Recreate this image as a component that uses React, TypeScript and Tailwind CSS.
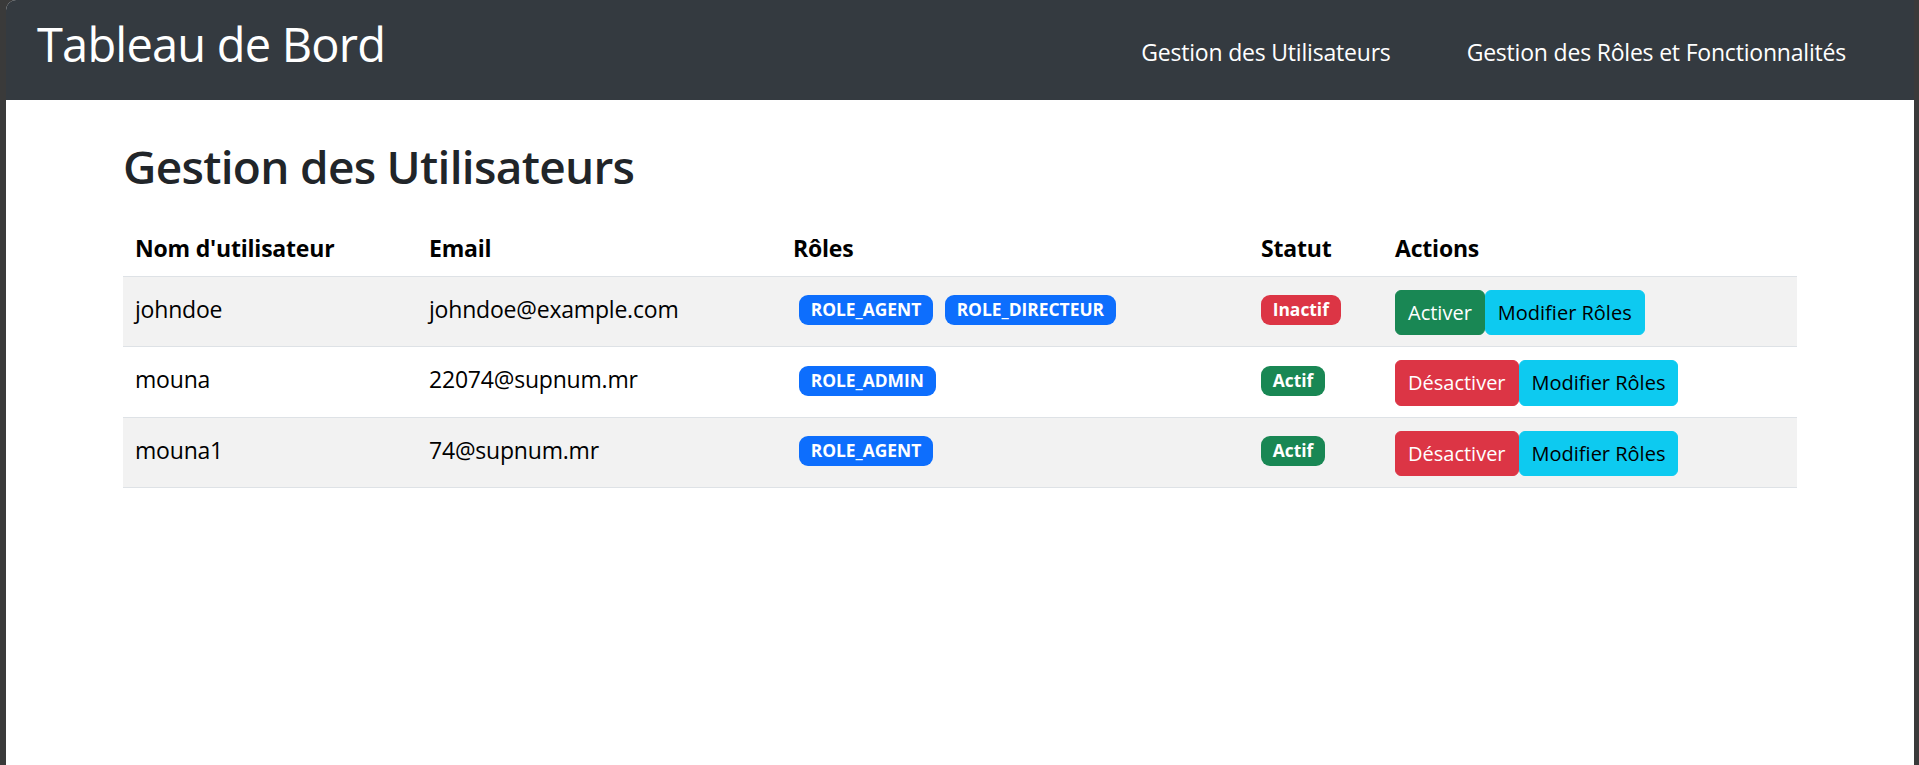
import React from "react";

type User = {
  name: string;
  email: string;
  roles: string[];
  active: boolean;
};

const users: User[] = [
  { name: "johndoe", email: "johndoe@example.com", roles: ["ROLE_AGENT", "ROLE_DIRECTEUR"], active: false },
  { name: "mouna", email: "22074@supnum.mr", roles: ["ROLE_ADMIN"], active: true },
  { name: "mouna1", email: "74@supnum.mr", roles: ["ROLE_AGENT"], active: true },
];

const font = { fontFamily: '"Open Sans", "Noto Sans", Arial, sans-serif' };

function Badge({ color, extra, children }: { color: string; extra?: string; children: React.ReactNode }) {
  return (
    <span
      className={`flex h-[30px] items-center rounded-[9px] px-[11.7px] text-[17.4px] font-bold leading-none text-white ${color} ${extra ?? ""}`}
    >
      {children}
    </span>
  );
}

export default function App() {
  return (
    <div className="h-screen w-full overflow-hidden bg-[#3a3a3a] pl-[6px] pr-[5px]" style={font}>
      <div className="h-full overflow-hidden rounded-tl-[10px] bg-white">
        <nav className="flex h-[100px] items-start justify-between bg-[#343a40] pl-[31px] pr-[68px]">
          <span className="mt-[16px] whitespace-nowrap text-[47px] leading-[57.6px] tracking-[-0.8px] text-white">
            Tableau de Bord
          </span>
          <div className="mt-[34px] flex gap-[76px] text-[23px] leading-[36px] tracking-[-0.2px] text-white">
            <a className="whitespace-nowrap">Gestion des Utilisateurs</a>
            <a className="whitespace-nowrap">Gestion des Rôles et Fonctionnalités</a>
          </div>
        </nav>

        <main className="mx-auto w-[1674px] pt-[38px] text-[#212529]">
          <h2 className="mb-[20px] text-[46px] font-semibold leading-[57.6px] tracking-[-0.7px]">Gestion des Utilisateurs</h2>

          <div className="w-full text-[23px] leading-[36px] tracking-[-0.2px]">
            <div className="flex h-[61px] border-b border-[#dee2e6] font-bold text-black">
              <div className="w-[294px] px-[12px] pt-[14px]">Nom d'utilisateur</div>
              <div className="w-[364px] px-[12px] pt-[14px]">Email</div>
              <div className="w-[468px] px-[12px] pt-[14px]">Rôles</div>
              <div className="w-[134px] px-[12px] pt-[14px]">Statut</div>
              <div className="flex-1 px-[12px] pt-[14px]">Actions</div>
            </div>

            {users.map((u, i) => (
              <div
                key={u.name}
                className={`flex h-[70.5px] border-b border-[#dee2e6] ${i % 2 === 0 ? "bg-[#f2f2f2]" : "bg-white"}`}
              >
                <div className="w-[294px] px-[12px] pt-[14px] text-black">{u.name}</div>
                <div className="w-[364px] px-[12px] pt-[14px] text-black">{u.email}</div>
                <div className="flex w-[468px] items-start px-[12px] pt-[18.5px] tracking-normal">
                  {u.roles.map((r) => (
                    <Badge key={r} color="bg-[#0d6efd]" extra="mx-[6px]">
                      {r}
                    </Badge>
                  ))}
                </div>
                <div className="flex w-[134px] items-start px-[12px] pt-[18.5px] tracking-normal">
                  {u.active ? (
                    <Badge color="bg-[#198754]">Actif</Badge>
                  ) : (
                    <Badge color="bg-[#dc3545]">Inactif</Badge>
                  )}
                </div>
                <div className="flex flex-1 items-start px-[12px] pt-[13px] tracking-normal">
                  {u.active ? (
                    <button className="h-[45.5px] whitespace-nowrap rounded-[6px] border border-[#dc3545] bg-[#dc3545] px-[12px] text-[20px] leading-[31.5px] text-white">
                      Désactiver
                    </button>
                  ) : (
                    <button className="h-[45.5px] whitespace-nowrap rounded-[6px] border border-[#198754] bg-[#198754] px-[12px] text-[20px] leading-[31.5px] text-white">
                      Activer
                    </button>
                  )}
                  <button className="h-[45.5px] whitespace-nowrap rounded-[6px] border border-[#0dcaf0] bg-[#0dcaf0] px-[12px] text-[20px] leading-[31.5px] text-black">
                    Modifier Rôles
                  </button>
                </div>
              </div>
            ))}
          </div>
        </main>
      </div>
    </div>
  );
}
